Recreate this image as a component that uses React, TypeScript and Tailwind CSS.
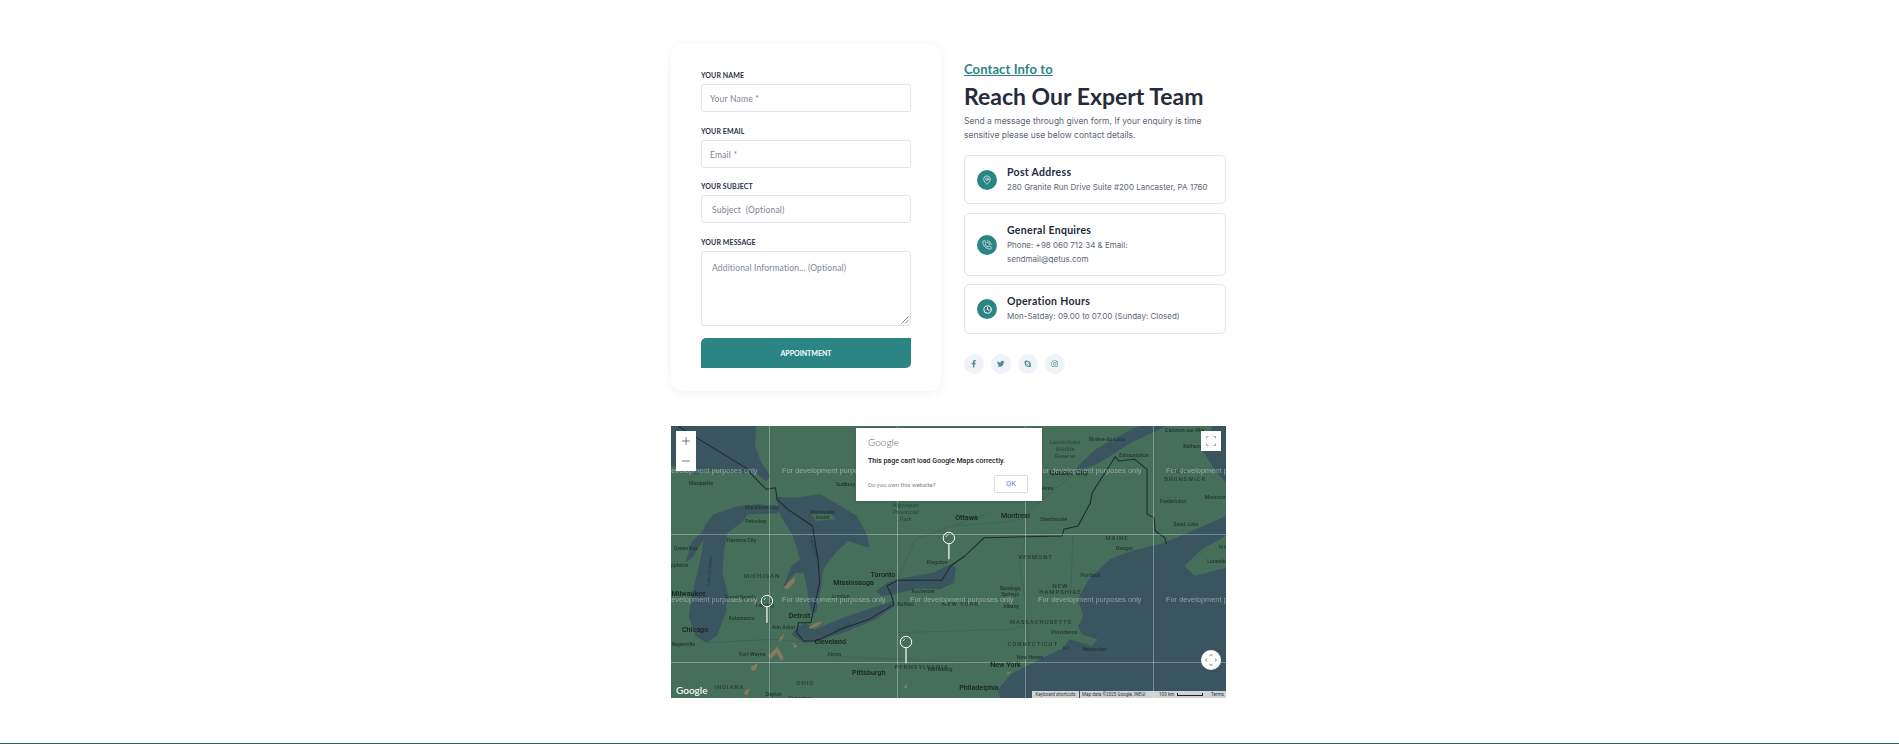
import { MapPin, PhoneCall, Clock, Plus, Minus } from 'lucide-react';
import { FaFacebookF, FaTwitter, FaSkype, FaInstagram } from 'react-icons/fa';

const heading = { fontFamily: 'Lato, sans-serif' };

// Shapes and labels are traced off the map at 1568x816, then scaled down to 555x272
const SX = 555 / 1568;
const SY = 272 / 816;

const water = [
  '0,0 240,0 238,60 255,110 282,150 268,165 240,140 180,142 130,130 70,145 30,130 0,118',
  '320,245 250,235 190,240 120,265 95,300 90,360 75,440 60,500 50,570 70,630 100,650 130,630 155,560 160,500 145,440 150,370 160,320 205,285 215,265 300,262',
  '60,345 100,305 95,335 60,395 40,410',
  '295,212 350,215 420,205 480,240 525,270 555,330 560,365 500,345 465,380 430,430 425,480 410,560 395,560 385,490 375,440 350,440 315,490 340,420 365,400 345,330 310,270',
  '360,600 340,625 375,650 430,640 500,615 580,580 632,540 628,525 570,545 500,570 440,595 405,612 380,590',
  '580,495 610,470 640,460 740,440 790,415 805,425 800,470 760,490 690,488 630,505 595,510',
  '1568,816 930,816 925,790 960,745 1050,695 1110,665 1125,640 1190,660 1205,640 1160,625 1150,600 1165,570 1150,520 1180,460 1240,400 1300,375 1390,352 1405,345 1440,330 1568,270',
  '1140,140 1150,120 1200,70 1300,10 1330,0 1400,0 1300,50 1210,110',
  '1530,0 1568,0 1568,170 1535,130 1500,70',
];

const land = [
  '1450,420 1500,370 1568,330 1568,425 1480,450',
  '395,262 450,262 465,280 410,285',
];

const patches = [
  '318,485 335,465 352,450 348,470 330,490',
  '388,605 410,590 430,585 415,600 395,608',
  '275,690 300,662 318,695 312,705 298,680 282,700',
  '225,722 245,712 240,732 230,735',
  '208,795 222,787 218,806 208,806',
  '305,640 320,620 316,638 308,648',
  '342,650 358,660 350,668',
  '658,785 666,770 667,788',
  '945,742 962,735 956,744',
];

const border =
  '20,0 80,40 210,125 250,170 270,190 295,185 300,220 330,250 400,300 415,400 420,470 405,540 395,590 360,590 355,620 375,645 410,645 480,610 560,580 630,535 622,505 610,480 640,463 765,463 790,420 830,390 885,335 1105,330 1110,310 1150,300 1160,280 1185,230 1190,200 1255,92 1265,105 1310,100 1345,130 1345,265 1365,275 1368,315 1395,335 1400,355';

const thinLines = [
  '1002,330 985,420 1000,520 1010,650',
  '1135,330 1130,500 1150,520',
  '640,620 960,610 1000,600',
  '460,690 640,700 900,710',
  '100,650 290,640 400,650',
  '280,520 280,816',
  '640,460 690,340 900,260',
  '800,300 975,285 1130,150',
];

const cities: [string, number, number][] = [
  ['Ottawa', 835, 275],
  ['Montreal', 973, 267],
  ['Toronto', 599, 445],
  ['Mississauga', 516, 470],
  ['Detroit', 363, 569],
  ['Cleveland', 450, 646],
  ['Milwaukee', 50, 503],
  ['Chicago', 68, 610],
  ['Pittsburgh', 559, 740],
  ['Philadelphia', 870, 783],
  ['New York', 945, 716],
  ['Quebec City', 1124, 140],
];

const towns: [string, number, number][] = [
  ['Marquette', 85, 171],
  ['Sudbury', 493, 174],
  ['Mackinaw City', 256, 245],
  ['Manitoulin', 428, 258],
  ['Island', 428, 274],
  ['Petoskey', 240, 285],
  ['Traverse City', 198, 343],
  ['Green Bay', 42, 366],
  ['Appleton', 20, 418],
  ['Kingston', 752, 408],
  ['Rochester', 713, 495],
  ['Buffalo', 663, 534],
  ['Grand Rapids', 196, 513],
  ['Lansing', 265, 537],
  ['Kalamazoo', 200, 577],
  ['Ann Arbor', 318, 604],
  ['Naperville', 35, 654],
  ['Fort Wayne', 230, 686],
  ['Akron', 461, 686],
  ['London', 480, 510],
  ['Harrisburg', 760, 731],
  ['Dayton', 290, 804],
  ['Columbus', 365, 818],
  ['Sherbrooke', 1081, 281],
  ['Portland', 1185, 447],
  ['Bangor', 1281, 366],
  ['Providence', 1111, 618],
  ['New Haven', 1014, 694],
  ['Nantucket', 1196, 669],
  ['Albany', 961, 541],
  ['Saratoga', 958, 488],
  ['Springs', 958, 505],
  ['Fredericton', 1418, 226],
  ['Moncton', 1537, 214],
  ['Saint John', 1455, 294],
  ['Edmundston', 1308, 87],
  ['Rivière-du-Loup', 1232, 41],
  ['Carleton-sur-Mer', 1452, 14],
  ['Bathurst', 1475, 62],
  ['Trois-Rivières', 1035, 188],
  ['Lunenburg', 1550, 407],
];

const regions: [string, number, number][] = [
  ['MICHIGAN', 257, 449],
  ['INDIANA', 165, 781],
  ['OHIO', 380, 771],
  ['PENNSYLVANIA', 708, 722],
  ['NEW YORK', 818, 534],
  ['VERMONT', 1030, 393],
  ['NEW', 1100, 478],
  ['HAMPSHIRE', 1100, 498],
  ['MASSACHUSETTS', 1045, 587],
  ['CONNECTICUT', 1022, 653],
  ['RI', 1118, 666],
  ['MAINE', 1260, 335],
  ['NEW', 1440, 135],
  ['BRUNSWICK', 1453, 157],
  ['NO', 1562, 363],
];

const parks: [string, number, number][] = [
  ['Algonquin', 663, 237],
  ['Provincial', 663, 257],
  ['Park', 663, 278],
  ['Laurentides', 1113, 47],
  ['Wildlife', 1113, 68],
  ['Reserve', 1113, 89],
];

const pins: [number, number, number][] = [
  [785, 336, 400],
  [271, 525, 590],
  [664, 648, 712],
];

function MapCanvas() {
  return (
    <svg viewBox="0 0 555 272" className="absolute inset-0 w-full h-full blur-[0.3px]" style={{ fontFamily: 'Roboto, sans-serif' }}>
      <rect width="555" height="272" fill="#456e5b" />
      <g transform={`scale(${SX} ${SY})`}>
        {water.map((p, i) => (
          <polygon key={i} points={p} fill="#3a5560" />
        ))}
        {land.map((p, i) => (
          <polygon key={i} points={p} fill="#456e5b" />
        ))}
        {patches.map((p, i) => (
          <polygon key={i} points={p} fill="#8a7a5c" />
        ))}
        {thinLines.map((p, i) => (
          <polyline key={i} points={p} fill="none" stroke="#2f4f48" strokeWidth="1.5" opacity="0.6" />
        ))}
        <polyline points={border} fill="none" stroke="#1e2b2e" strokeWidth="3" strokeLinejoin="round" />
      </g>

      {[98.5, 226.5, 354.5, 482.5].map((x) => (
        <line key={x} x1={x} x2={x} y1="0" y2="272" stroke="#ffffff" strokeOpacity="0.32" />
      ))}
      {[108.5, 236.5].map((y) => (
        <line key={y} y1={y} y2={y} x1="0" x2="555" stroke="#ffffff" strokeOpacity="0.32" />
      ))}

      {cities.map(([t, x, y]) => (
        <text key={t} x={x * SX} y={y * SY + 2.5} textAnchor="middle" fontSize="7.2" fontWeight="500" fill="#17211f">
          {t}
        </text>
      ))}
      {towns.map(([t, x, y]) => (
        <text key={t} x={x * SX} y={y * SY + 1.8} textAnchor="middle" fontSize="5.2" fontWeight="500" fill="#1d2a28" opacity="0.85">
          {t}
        </text>
      ))}
      {regions.map(([t, x, y], i) => (
        <text key={i} x={x * SX} y={y * SY + 2.2} textAnchor="middle" fontSize="6" fontWeight="500" letterSpacing="0.9" fill="#25302f" opacity="0.85">
          {t}
        </text>
      ))}
      {parks.map(([t, x, y]) => (
        <text key={t} x={x * SX} y={y * SY + 2.2} textAnchor="middle" fontSize="6" fontStyle="italic" fill="#24403a" opacity="0.9">
          {t}
        </text>
      ))}
      <text transform="translate(40 145) rotate(-85)" textAnchor="middle" fontSize="4.5" fill="#1d2a28" opacity="0.6">Lake Michigan</text>
      <text transform="translate(142 122) rotate(72)" textAnchor="middle" fontSize="4.5" fill="#1d2a28" opacity="0.6">Lake Huron</text>
      <text transform="translate(172 203) rotate(-22)" textAnchor="middle" fontSize="4.5" fill="#1d2a28" opacity="0.6">Lake Erie</text>

      {[44, 173].map((y) =>
        [-17, 111, 239, 367, 495].map((x) => (
          <text key={`${x}-${y}`} x={x} y={y + 2.8} fontSize="7.4" fontFamily="Liberation Sans, sans-serif" fill="#ffffff" fillOpacity="0.42">
            For development purposes only
          </text>
        )),
      )}

      {pins.map(([x, y, end]) => (
        <g key={x}>
          <line x1={x * SX} x2={x * SX} y1={y * SY + 6} y2={end * SY} stroke="#ffffff" strokeOpacity="0.75" strokeWidth="1.6" />
          <circle cx={x * SX} cy={y * SY} r="5.7" fill="none" stroke="#ffffff" strokeWidth="1" />
          <path d={`M${x * SX - 3} ${y * SY - 1} L${x * SX - 1} ${y * SY - 3.4}`} stroke="#ffffff" strokeWidth="0.7" />
        </g>
      ))}
    </svg>
  );
}

function MapSection() {
  return (
    <div className="relative w-full h-[272px] overflow-hidden mt-[35px]">
      <MapCanvas />

      {/* zoom buttons */}
      <div className="absolute left-[5px] top-[5px] w-[20px] h-[40px] bg-white flex flex-col items-center justify-around text-[#666]">
        <Plus size={12} strokeWidth={1.8} />
        <Minus size={12} strokeWidth={1.8} />
      </div>

      {/* fullscreen */}
      <div className="absolute right-[5px] top-[5px] w-[20px] h-[20px] bg-white flex items-center justify-center">
        <svg width="10" height="10" viewBox="0 0 10 10" fill="none" stroke="#888" strokeWidth="0.8">
          <path d="M0.5 2.5V0.5H2.5M7.5 0.5H9.5V2.5M9.5 7.5V9.5H7.5M2.5 9.5H0.5V7.5" />
        </svg>
      </div>

      {/* street view / move control */}
      <div className="absolute right-[5px] bottom-[28px] w-[20px] h-[20px] rounded-full bg-white flex items-center justify-center">
        <svg width="12" height="12" viewBox="0 0 12 12" fill="none" stroke="#666" strokeWidth="0.9">
          <path d="M4.5 1.9L6 0.6L7.5 1.9M4.5 10.1L6 11.4L7.5 10.1M1.9 4.5L0.6 6L1.9 7.5M10.1 4.5L11.4 6L10.1 7.5" />
        </svg>
      </div>

      <span className="absolute left-[5px] bottom-[1px] text-[10px] leading-[14px] font-medium text-white" style={{ fontFamily: 'Lato, sans-serif' }}>
        Google
      </span>

      {/* attribution */}
      <div className="absolute right-0 bottom-0 h-[7px] flex items-center text-[4.6px] leading-[7px] text-[#333] gap-[1px]" style={{ fontFamily: 'Roboto, sans-serif' }}>
        <span className="bg-[#f5f5f5]/80 h-full px-[1.5px] w-[47px] text-center">Keyboard shortcuts</span>
        <span className="bg-[#f5f5f5]/80 h-full flex items-center w-[146px] pl-[2px]">
          <span className="w-[77px]">Map data ©2025 Google, INEGI</span>
          <span className="w-[18px]">100 km</span>
          <span className="w-[26px] h-[3px] border-b border-x border-[#222]" />
          <span className="ml-auto pr-[2px]">Terms</span>
        </span>
      </div>

      {/* load error dialog */}
      <div className="absolute left-[185px] top-[2px] w-[186px] h-[73px] bg-white pl-[12px] pr-[14px] shadow-sm" style={{ fontFamily: 'Roboto, sans-serif' }}>
        <div className="pt-[8px] text-[10px] leading-[13px] font-light text-[#5f6368]" style={{ fontFamily: 'Lato, sans-serif' }}>Google</div>
        <div className="mt-[7px] text-[7.05px] leading-[10px] font-medium text-[#222]">This page can't load Google Maps correctly.</div>
        <div className="mt-[9px] flex items-center justify-between">
          <span className="text-[6px] text-[#80868b]">Do you own this website?</span>
          <span className="w-[34px] h-[18px] border border-[#dadce0] rounded-[1px] flex items-center justify-center text-[7.5px] text-[#4285f4]">OK</span>
        </div>
      </div>
    </div>
  );
}

function Field({ label, placeholder, textClass, className }: { label: string; placeholder: string; textClass: string; className: string }) {
  return (
    <div className={className}>
      <div className="text-[7px] leading-[9px] font-bold tracking-[0.1px] text-[#2b3245] mb-[4px]" style={heading}>{label}</div>
      <div className={`h-[28px] pt-[3px] border border-[#e3e4ee] rounded-[3px] flex items-center text-[8.5px] tracking-[0.2px] text-[#7d8594] ${textClass}`} style={heading}>
        {placeholder}
      </div>
    </div>
  );
}

function ContactForm() {
  return (
    <div className="w-[270px] h-[347px] rounded-xl bg-white shadow-[0_2px_12px_rgba(30,40,80,0.06)] px-[30px] pt-[27px]">
      <Field label="YOUR NAME" placeholder="Your Name *" textClass="pl-[8px]" className="mb-[15px]" />
      <Field label="YOUR EMAIL" placeholder="Email *" textClass="pl-[8px]" className="mb-[14px]" />
      <Field label="YOUR SUBJECT" placeholder="Subject  (Optional)" textClass="pl-[10px] whitespace-pre" className="mb-[15px]" />

      <div className="text-[7px] leading-[9px] font-bold tracking-[0.1px] text-[#2b3245] mb-[4px]" style={heading}>YOUR MESSAGE</div>
      <div className="relative h-[75px] border border-[#e3e4ee] rounded-[3px] pl-[10px] pt-[11px] text-[8.5px] leading-[10px] tracking-[0.15px] text-[#7d8594]" style={heading}>
        Additional Information... (Optional)
        <svg width="8" height="8" viewBox="0 0 8 8" className="absolute right-[1px] bottom-[1px]" stroke="#555" strokeWidth="0.7">
          <path d="M0.5 7.5L7.5 0.5M4 7.5L7.5 4" />
        </svg>
      </div>

      <button className="mt-[12px] w-full h-[30px] bg-[#2c8585] rounded-tl-[5px] rounded-br-[5px] text-white text-[7px] font-bold flex items-center justify-center" style={heading}>
        APPOINTMENT
      </button>
    </div>
  );
}

function InfoCard({ title, icon, className, children }: { title: string; icon: React.ReactNode; className: string; children: React.ReactNode }) {
  return (
    <div className={`flex items-center border border-[#e3e4ee] rounded-[5px] pl-[12px] ${className}`}>
      <div className="w-[20px] h-[20px] rounded-full bg-[#2c8585] flex items-center justify-center text-white shrink-0">{icon}</div>
      <div className="ml-[10px]">
        <div className="text-[10.5px] leading-[14px] font-bold tracking-[0.3px] text-[#232a3b]" style={heading}>{title}</div>
        <div className="mt-[2px] text-[8px] leading-[13.5px] text-[#5d6675]">{children}</div>
      </div>
    </div>
  );
}

function ContactInfo() {
  const socials = [FaFacebookF, FaTwitter, FaSkype, FaInstagram];
  return (
    <div className="w-[262px]" style={{ fontFamily: 'Inter, sans-serif' }}>
      <div className="mt-[17px] text-[13px] leading-[16px] font-bold tracking-[0.1px] text-[#2c8585] underline" style={heading}>Contact Info to</div>
      <h2 className="mt-[6px] text-[23px] leading-[26px] font-bold text-[#252b3c]" style={heading}>Reach Our Expert Team</h2>
      <p className="mt-[5px] text-[8.5px] leading-[14px] text-[#5d6675]">
        Send a message through given form, If your enquiry is time<br />sensitive please use below contact details.
      </p>

      <div className="mt-[13px] flex flex-col gap-[8px]">
        <InfoCard title="Post Address" icon={<MapPin size={10} strokeWidth={1.6} />} className="h-[49px] mb-px">
          280 Granite Run Drive Suite #200 Lancaster, PA 1760
        </InfoCard>
        <InfoCard title="General Enquires" icon={<PhoneCall size={10} strokeWidth={1.6} />} className="h-[63px]">
          Phone: +98 060 712 34 &amp; Email:<br />sendmail@qetus.com
        </InfoCard>
        <InfoCard title="Operation Hours" icon={<Clock size={9} strokeWidth={2.6} />} className="h-[50px]">
          Mon-Satday: 09.00 to 07.00 (Sunday: Closed)
        </InfoCard>
      </div>

      <div className="mt-[20px] flex gap-[7px]">
        {socials.map((Icon, i) => (
          <div key={i} className="w-[20px] h-[20px] rounded-full bg-[#eff3f8] flex items-center justify-center text-[#4a8f97]">
            <Icon size={7.5} />
          </div>
        ))}
      </div>
    </div>
  );
}

export default function App() {
  return (
    <div className="h-[744px] overflow-hidden bg-white flex flex-col">
      <div className="flex-1 flex justify-center pr-[2px] pt-[44px]">
        <div className="w-[555px]">
          <div className="flex gap-[23px]">
            <ContactForm />
            <ContactInfo />
          </div>
          <MapSection />
        </div>
      </div>
      <div className="h-px bg-[#2f5f5f]" />
    </div>
  );
}
